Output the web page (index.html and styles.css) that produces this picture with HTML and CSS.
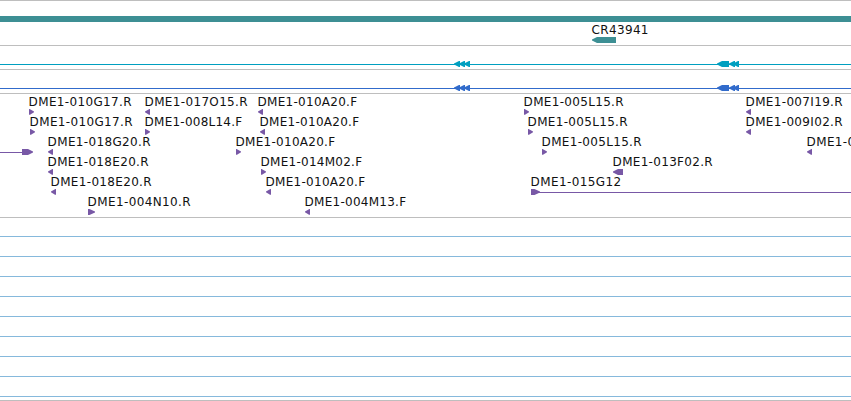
FILE: index.html
```
<!DOCTYPE html>
<html lang="en">
<head>
    <meta charset="UTF-8">
    <title>Genome Map</title>
    <link rel="stylesheet" href="styles.css">
</head>
<body>
    <svg width="0" height="0" class="defs">
        <defs>
            <path id="fwd" d="M0 0h.6l4.4 2.4v.8l-4 2.6h-1z"/>
            <path id="rev" d="M5 0h-.6l-4.4 2.4v.8l4 2.6h1z"/>
            <path id="exon" d="M0 2.6l5-2.6h1v6h-1l-5-2.6z"/>
        </defs>
    </svg>

    <div class="map">
        <div class="track gene-track">
            <div class="bar"></div>
            <svg class="gene" width="851" height="23">
                <text x="591.5" y="12" textLength="57">CR43941</text>
                <path d="M592 17.6l5-2.6h19v6h-19l-5-2.6z"/>
            </svg>
        </div>

        <div class="track transcript">
            <svg class="cyan" width="851" height="23">
                <rect x="0" y="18" width="851" height="1"/>
                <use href="#exon" x="454" y="15"/>
                <use href="#exon" x="459" y="15"/>
                <use href="#exon" x="464" y="15"/>
                <path d="M717 17.6l5-2.6h7v6h-7l-5-2.6z"/>
                <use href="#exon" x="729" y="15"/>
                <use href="#exon" x="733" y="15"/>
            </svg>
        </div>

        <div class="track transcript">
            <svg class="blue" width="851" height="23">
                <rect x="0" y="18" width="851" height="1"/>
                <use href="#exon" x="454" y="15"/>
                <use href="#exon" x="459" y="15"/>
                <use href="#exon" x="464" y="15"/>
                <path d="M717 17.6l5-2.6h7v6h-7l-5-2.6z"/>
                <use href="#exon" x="729" y="15"/>
                <use href="#exon" x="733" y="15"/>
            </svg>
        </div>

        <div class="track clones">
            <svg class="row" width="851" height="20">
                <text x="28.6" y="12" textLength="103">DME1-010G17.R</text>
                <use href="#fwd" x="29" y="15"/>
                <text x="144.6" y="12" textLength="103">DME1-017O15.R</text>
                <use href="#rev" x="145" y="15"/>
                <text x="257.6" y="12" textLength="99.5">DME1-010A20.F</text>
                <use href="#rev" x="258" y="15"/>
                <text x="523.6" y="12" textLength="100">DME1-005L15.R</text>
                <use href="#fwd" x="524" y="15"/>
                <text x="745.6" y="12" textLength="97">DME1-007I19.R</text>
                <use href="#rev" x="746" y="15"/>
            </svg>
            <svg class="row" width="851" height="20">
                <text x="29.6" y="12" textLength="103">DME1-010G17.R</text>
                <use href="#fwd" x="30" y="15"/>
                <text x="144.6" y="12" textLength="97.5">DME1-008L14.F</text>
                <use href="#fwd" x="145" y="15"/>
                <text x="259.6" y="12" textLength="99.5">DME1-010A20.F</text>
                <use href="#rev" x="260" y="15"/>
                <text x="527.6" y="12" textLength="100">DME1-005L15.R</text>
                <use href="#fwd" x="528" y="15"/>
                <text x="745.6" y="12" textLength="97">DME1-009I02.R</text>
                <use href="#rev" x="746" y="15"/>
            </svg>
            <svg class="row" width="851" height="20">
                <rect x="0" y="18" width="23" height="1"/>
                <path d="M22 15h6l5 2.6v.8l-5 2.6h-6z"/>
                <text x="47.6" y="12" textLength="103">DME1-018G20.R</text>
                <use href="#rev" x="48" y="15"/>
                <text x="235.6" y="12" textLength="99.5">DME1-010A20.F</text>
                <use href="#fwd" x="236" y="15"/>
                <text x="541.6" y="12" textLength="100">DME1-005L15.R</text>
                <use href="#fwd" x="542" y="15"/>
                <text x="806.6" y="12" textLength="48.5">DME1-0</text>
                <use href="#rev" x="807" y="15"/>
            </svg>
            <svg class="row" width="851" height="20">
                <text x="47.6" y="12" textLength="101">DME1-018E20.R</text>
                <use href="#rev" x="48" y="15"/>
                <text x="260.6" y="12" textLength="101.5">DME1-014M02.F</text>
                <use href="#fwd" x="261" y="15"/>
                <text x="612.6" y="12" textLength="100">DME1-013F02.R</text>
                <path d="M613 17.6l5-2.6h5v6h-5l-5-2.6z"/>
            </svg>
            <svg class="row" width="851" height="20">
                <text x="50.6" y="12" textLength="101">DME1-018E20.R</text>
                <use href="#rev" x="51" y="15"/>
                <text x="265.6" y="12" textLength="99.5">DME1-010A20.F</text>
                <use href="#rev" x="266" y="15"/>
                <text x="530.6" y="12" textLength="90.5">DME1-015G12</text>
                <path d="M531 15h3.5l5.5 2.6v.8l-5.5 2.6h-3.5z"/>
                <rect x="538" y="18" width="313" height="1"/>
            </svg>
            <svg class="row" width="851" height="20">
                <text x="87.6" y="12" textLength="103">DME1-004N10.R</text>
                <path d="M88 15h1.5l5.5 2.6v.8l-5.5 2.6h-1.5z"/>
                <text x="304.6" y="12" textLength="101.5">DME1-004M13.F</text>
                <use href="#rev" x="305" y="15"/>
            </svg>
        </div>

        <div class="track levels">
            <div class="level"></div>
            <div class="level"></div>
            <div class="level"></div>
            <div class="level"></div>
            <div class="level"></div>
            <div class="level"></div>
            <div class="level"></div>
            <div class="level"></div>
            <div class="level"></div>
        </div>
    </div>
</body>
</html>
```
FILE: styles.css
```
body {
    margin: 0;
    background-color: #fff;
    overflow: hidden;
}
.defs {
    display: block;
}
.map {
    width: 851px;
    height: 401px;
    box-sizing: border-box;
    border-bottom: 1px solid #bebebe;
    font-family: "DejaVu Sans", sans-serif;
    font-size: 12px;
}
.track {
    box-sizing: border-box;
    border-top: 1px solid #bebebe;
}
.track svg {
    display: block;
}
text {
    fill: #111;
}
.gene-track {
    height: 45px;
    padding-top: 15px;
}
.bar {
    height: 6px;
    background-color: #3d8f94;
}
.gene {
    fill: #3d8f94;
}
.transcript {
    height: 24px;
}
.cyan {
    fill: #009fc0;
}
.blue {
    fill: #316bcb;
}
.clones {
    height: 124px;
    fill: #7858a6;
}
/* arrows hang slightly below their row */
.row {
    overflow: visible;
}
.levels {
    height: 183px;
    padding-top: 18px;
}
.level {
    height: 19px;
    border-top: 1px solid #86b9dc;
}
.level:last-child {
    height: 0;
}
```
